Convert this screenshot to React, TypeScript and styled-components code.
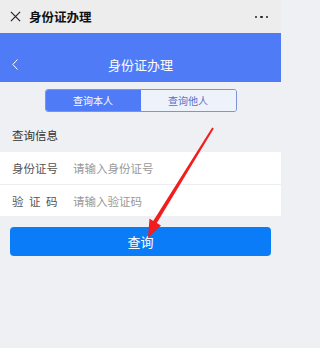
import { createGlobalStyle } from 'styled-components';
import styled from 'styled-components';

const GlobalStyle = createGlobalStyle`
  html, body {
    margin: 0;
    padding: 0;
    background: #eef0f4;
  }
  * {
    box-sizing: border-box;
  }
  body {
    font-family: "Noto Sans CJK SC", "Noto Sans", sans-serif;
  }
`;

const App = () => {
  return (
    <Page>
      <GlobalStyle />
      <TopBar>
        <CloseIcon viewBox="0 0 12 12">
          <path d="M1 1 L11 11 M11 1 L1 11" stroke="#222" strokeWidth="1.3" fill="none" />
        </CloseIcon>
        <TopTitle>身份证办理</TopTitle>
        <MoreDots>
          <Dot />
          <Dot />
          <Dot />
        </MoreDots>
      </TopBar>
      <Header>
        <BackIcon viewBox="0 0 6 11">
          <path d="M5.5 0.5 L0.8 5.5 L5.5 10.5" stroke="#fff" strokeWidth="1" fill="none" />
        </BackIcon>
        <HeaderTitle>身份证办理</HeaderTitle>
      </Header>
      <TabsRow>
        <Tabs>
          <Tab active>查询本人</Tab>
          <Tab>查询他人</Tab>
        </Tabs>
      </TabsRow>
      <SectionTitle>查询信息</SectionTitle>
      <FormCard>
        <FormRow>
          <Label>身份证号</Label>
          <Placeholder>请输入身份证号</Placeholder>
        </FormRow>
        <FormRow>
          <Label spaced>验证码</Label>
          <Placeholder>请输入验证码</Placeholder>
        </FormRow>
      </FormCard>
      <ButtonWrap>
        <SubmitButton>查询</SubmitButton>
      </ButtonWrap>
      <Arrow viewBox="0 0 281 348">
        <polygon
          points="148,238 149.5,218.5 153.2,220.9 212.2,127.6 213.8,128.5 156.8,223.1 161,225.5"
          fill="#f21d1d"
        />
      </Arrow>
    </Page>
  );
};

export default App;

const Page = styled.div`
  position: relative;
  width: 281px;
  height: 348px;
  background: #eef0f4;
  overflow: hidden;
`;
const TopBar = styled.div`
  height: 33px;
  background: #ededed;
  display: flex;
  align-items: center;
  padding: 0 13px 0 10px;
`;
const CloseIcon = styled.svg`
  width: 11px;
  height: 11px;
  margin-right: 8px;
`;
const TopTitle = styled.div`
  font-size: 12.5px;
  font-weight: 700;
  color: #111;
  flex: 1;
`;
const MoreDots = styled.div`
  display: flex;
  gap: 3px;
  margin-top: 1px;
`;
const Dot = styled.span`
  width: 2.5px;
  height: 2.5px;
  border-radius: 50%;
  background: #222;
`;
const Header = styled.div`
  height: 49px;
  background: #4f7cf6;
  display: flex;
  align-items: center;
  justify-content: center;
  position: relative;
  padding-top: 13px;
`;
const BackIcon = styled.svg`
  position: absolute;
  left: 12px;
  top: 26px;
  width: 6px;
  height: 11px;
`;
const HeaderTitle = styled.div`
  color: #fff;
  font-size: 13px;
`;
const TabsRow = styled.div`
  display: flex;
  justify-content: center;
  padding-top: 7px;
`;
const Tabs = styled.div`
  width: 192px;
  height: 23px;
  display: flex;
  border: 1px solid #7e94d6;
  border-radius: 3px;
  overflow: hidden;
`;
const Tab = styled.div<{ active?: boolean }>`
  flex: 1;
  display: flex;
  align-items: center;
  justify-content: center;
  font-size: 10px;
  background: ${props => (props.active ? '#4f7cf6' : '#eef2fa')};
  color: ${props => (props.active ? '#fff' : '#5571c9')};
`;
const SectionTitle = styled.div`
  font-size: 11.5px;
  color: #333;
  padding: 15px 12px 0;
  height: 40px;
`;
const FormCard = styled.div`
  background: #fff;
`;
const FormRow = styled.div`
  height: 32px;
  display: flex;
  align-items: center;
  padding-left: 12px;
  & + & {
    border-top: 1px solid #eceef2;
  }
`;
const Label = styled.div<{ spaced?: boolean }>`
  width: 61px;
  font-size: 11.5px;
  color: #555;
  letter-spacing: ${props => (props.spaced ? '5.5px' : '0')};
`;
const Placeholder = styled.div`
  font-size: 11.5px;
  color: #999;
`;
const ButtonWrap = styled.div`
  padding: 11px 10px 0;
`;
const SubmitButton = styled.div`
  height: 29px;
  border-radius: 4px;
  background: #0b7cf8;
  color: #fff;
  font-size: 13px;
  display: flex;
  align-items: center;
  justify-content: center;
`;
const Arrow = styled.svg`
  position: absolute;
  left: 0;
  top: 0;
  width: 281px;
  height: 348px;
  pointer-events: none;
`;
